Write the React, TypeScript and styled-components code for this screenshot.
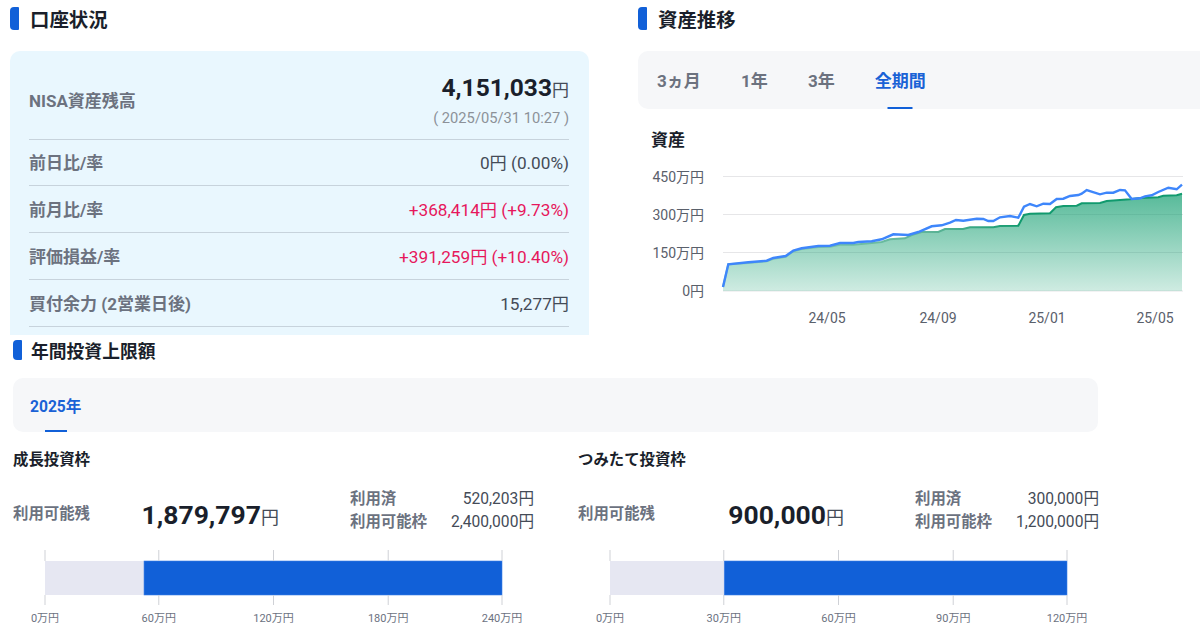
import React from "react";
import styled, { createGlobalStyle } from "styled-components";

const Global = createGlobalStyle`
  html, body { margin: 0; padding: 0; background: #fff; }
  body { font-family: Roboto, "Noto Sans CJK JP", sans-serif; color: #1a1f2b; }
  svg text { font-family: Roboto, "Noto Sans CJK JP", sans-serif; }
`;

const Page = styled.div`
  width: 1200px;
  height: 630px;
  overflow: hidden;
`;
const Top = styled.div`
  display: grid;
  grid-template-columns: 579px 562px;
  column-gap: 49px;
  height: 335px;
  padding: 7px 0 0 10px;
  box-sizing: border-box;
  overflow: hidden;
`;
const Column = styled.section`
  min-width: 0;
`;
const Heading = styled.h2<{ $size: number; $bar: number }>`
  display: flex;
  align-items: center;
  gap: ${(p) => (p.$size > 18 ? 11 : 9)}px;
  height: ${(p) => p.$bar}px;
  margin: 0;
  font-size: ${(p) => p.$size}px;
  font-weight: 700;
  color: #1a1f2b;
  &::before {
    content: "";
    width: 9px;
    height: ${(p) => p.$bar}px;
    background: #1160d8;
    border-radius: 4px 1px 1px 4px;
  }
`;
const Card = styled.div`
  margin-top: 21px;
  background: #e9f7fe;
  border-radius: 10px 10px 0 0;
  padding: 0 20px 0 19px;
  height: 284px;
  box-sizing: border-box;
`;
const Row = styled.div<{ $tall?: boolean }>`
  display: flex;
  justify-content: space-between;
  align-items: center;
  height: ${(p) => (p.$tall ? 88.6 : 46.75)}px;
  padding: ${(p) => (p.$tall ? "9px 0 0" : "0 0 1px")};
  box-sizing: border-box;
  border-bottom: 1px solid #c7d3dc;
`;
const RowLabel = styled.span`
  font-size: 17px;
  font-weight: 700;
  color: #6c727f;
`;
const RowValue = styled.span<{ $up?: boolean }>`
  font-size: 17.2px;
  color: ${(p) => (p.$up ? "#e6175c" : "#444b57")};
`;
const Total = styled.div`
  text-align: right;
`;
const TotalNumber = styled.div`
  font-size: 24.5px;
  line-height: 34px;
  font-weight: 700;
  color: #1a1f2b;
`;
const Yen = styled.span<{ $size: number }>`
  font-size: ${(p) => p.$size}px;
  font-weight: 400;
  color: #444b57;
`;
const TotalDate = styled.div`
  font-size: 14.7px;
  line-height: 20px;
  color: #8c9198;
  margin-top: 1px;
`;
const TabRow = styled.div<{ $top: number }>`
  margin-top: ${(p) => p.$top}px;
`;
const TabPanel = styled.div<{ $h: number; $pad: number; $round: string; $gap: number }>`
  display: flex;
  gap: ${(p) => p.$gap}px;
  align-items: center;
  height: ${(p) => p.$h}px;
  padding-left: ${(p) => p.$pad}px;
  background: #f6f7f9;
  border-radius: ${(p) => p.$round};
`;
const Tab = styled.div<{ $active?: boolean; $size: number; $line: number; $lift?: number }>`
  position: relative;
  height: 100%;
  box-sizing: border-box;
  padding-bottom: ${(p) => p.$lift ?? 0}px;
  display: flex;
  align-items: center;
  font-size: ${(p) => p.$size}px;
  font-weight: 700;
  color: ${(p) => (p.$active ? "#1a62d6" : "#6c727f")};
  &::after {
    content: "";
    display: ${(p) => (p.$active ? "block" : "none")};
    position: absolute;
    left: 50%;
    bottom: 0;
    width: ${(p) => p.$line}px;
    height: 2px;
    transform: translateX(-50%);
    background: #1160d8;
  }
`;
const ChartTitle = styled.h3`
  margin: 21px 0 0 13px;
  font-size: 17px;
  line-height: 20px;
  font-weight: 700;
  color: #1a1f2b;
`;
const AreaSvg = styled.svg`
  display: block;
  margin: 5px 0 0 1px;
`;
const Bottom = styled.section`
  padding: 5px 0 0 13px;
  width: 1085px;
`;
const Columns = styled.div`
  display: grid;
  grid-template-columns: 521px 521px;
  column-gap: 44px;
  margin-top: 18px;
`;
const Limit = styled.div``;
const LimitTitle = styled.h3`
  margin: 0;
  font-size: 15.4px;
  line-height: 20px;
  font-weight: 700;
  color: #1a1f2b;
`;
const LimitBody = styled.div`
  display: grid;
  grid-template-columns: 266px 1fr;
  margin-top: 17px;
  height: 46px;
  align-items: center;
`;
const Main = styled.div`
  display: flex;
  justify-content: space-between;
  align-items: center;
  padding-top: 4px;
`;
const Remain = styled.span`
  font-size: 15.4px;
  font-weight: 700;
  color: #6c727f;
`;
const Big = styled.span`
  font-size: 26.5px;
  font-weight: 700;
  color: #1a1f2b;
  padding-top: 4px;
`;
const Side = styled.div`
  display: grid;
  grid-template-columns: auto 1fr;
  margin-left: 71px;
  row-gap: 3px;
`;
const SideLabel = styled.span`
  font-size: 15.4px;
  line-height: 20px;
  font-weight: 700;
  color: #6c727f;
`;
const SideValue = styled.span`
  font-size: 15.6px;
  line-height: 20px;
  color: #444b57;
  text-align: right;
`;
const BarSvg = styled.svg`
  display: block;
  margin-top: 17px;
`;

const blue = "723,287 728.3,264.3 748.3,262.3 766.7,260.7 773.3,258 785.7,256 793.3,250.7 801.7,248.3 818.3,246 830,245.7 840,243 853.3,243 858.3,242 871.7,241.3 881.7,239.3 893.3,234.3 908.3,235 918.3,232 931.7,226.3 941.7,225.3 950,222.7 956,220 963.3,220.7 976.7,218.7 983.3,219 988.3,221 993.3,221 1000,217.3 1010,216 1018.3,217.7 1024,206.7 1030,204 1036.7,206.3 1043.3,203.7 1050,204 1056.7,199 1063.3,198.7 1070,196 1078.3,195 1081.7,193.7 1086.7,190 1100,194.3 1106.7,192.7 1113.3,192.7 1120,190 1125,190.3 1131.7,199 1140,198.3 1145,196.3 1151.7,195.3 1158.3,192 1168.3,187.7 1176.7,189.3 1182,184.7";
const green = "723,287 728.3,264.3 748.3,263 766.7,261.3 773.3,258.7 785.7,256.7 793.3,251.3 801.7,249 818.3,247 830,246.7 840,244.7 853.3,244.7 871.7,243 881.7,242 890,239.3 905,238.3 911.7,235 921.7,232 938.3,232 945,229 963,229 970,227.3 993.3,227.3 1000,226 1018.3,225.7 1024,215 1030,213.7 1050,213.3 1056,207.3 1063.3,206 1076.7,205.7 1081.7,203.3 1100,203 1106.7,201 1130,199.3 1140,198 1158.3,197.3 1163.3,195.7 1176.7,195.3 1182,193.7";

/* The chart svg starts at page x=639, y=155, so plot coordinates are shifted. */
const OX = 639;
const OY = 155;

function AreaChart() {
  const yTicks = [
    { label: "450万円", y: 176.5 },
    { label: "300万円", y: 214.5 },
    { label: "150万円", y: 252.5 },
    { label: "0円", y: 291 },
  ];
  const xTicks = [
    { label: "24/05", x: 827 },
    { label: "24/09", x: 938 },
    { label: "25/01", x: 1047 },
    { label: "25/05", x: 1155 },
  ];
  return (
    <AreaSvg width={561} height={175} viewBox={`${OX} ${OY} 561 175`}>
      <defs>
        <linearGradient id="assetFill" gradientUnits="userSpaceOnUse" x1="0" y1="190" x2="0" y2="291">
          <stop offset="0" stopColor="#0f9d6e" stopOpacity="0.72" />
          <stop offset="1" stopColor="#0f9d6e" stopOpacity="0.2" />
        </linearGradient>
        <linearGradient id="assetLine" gradientUnits="userSpaceOnUse" x1="723" y1="0" x2="1182" y2="0">
          <stop offset="0" stopColor="#8ccdb6" />
          <stop offset="0.45" stopColor="#5fb598" />
          <stop offset="0.65" stopColor="#119a6e" />
          <stop offset="1" stopColor="#119a6e" />
        </linearGradient>
      </defs>
      {yTicks.map((t) => (
        <line key={t.label} x1={723} x2={1183} y1={t.y} y2={t.y} stroke="#e6e6e8" strokeWidth={1} />
      ))}
      <polygon points={`${green} 1182,291 723,291`} fill="url(#assetFill)" />
      <polyline points={green} fill="none" stroke="url(#assetLine)" strokeWidth={2} />
      <polyline points={blue} fill="none" stroke="#3e86fb" strokeWidth={2.4} />
      {yTicks.map((t) => (
        <text key={t.label} x={704} y={t.y + 5} textAnchor="end" fontSize={14} fill="#5a606b">
          {t.label}
        </text>
      ))}
      {xTicks.map((t) => (
        <text key={t.label} x={t.x} y={323} textAnchor="middle" fontSize={14} fill="#5a606b">
          {t.label}
        </text>
      ))}
    </AreaSvg>
  );
}

const BAR_START = 32;
const BAR_W = 457;

function LimitBar({ used, labels }: { used: number; labels: string[] }) {
  const usedX = BAR_START + BAR_W * used;
  const ticks = [0, 0.249, 0.5, 0.751, 1];
  return (
    <BarSvg width={521} height={75} viewBox="0 0 521 75">
      <rect x={BAR_START} y={11} width={usedX - BAR_START} height={34} fill="#e6e7f2" />
      <rect x={usedX} y={11} width={BAR_START + BAR_W - usedX} height={34} fill="#1160d8" stroke="#3e7fe6" strokeWidth={0.6} />
      {ticks.map((t, i) => {
        const x = BAR_START + BAR_W * t;
        return (
          <g key={i}>
            <line x1={x} x2={x} y1={0} y2={11} stroke="#cfd1d6" />
            <line x1={x} x2={x} y1={45} y2={55} stroke="#cfd1d6" />
            <text x={x} y={72} textAnchor="middle" fontSize={11} fill="#6c727f">
              {labels[i]}
            </text>
          </g>
        );
      })}
    </BarSvg>
  );
}

function LimitBlock(p: { title: string; big: string; used: string; cap: string; ratio: number; labels: string[] }) {
  return (
    <Limit>
      <LimitTitle>{p.title}</LimitTitle>
      <LimitBody>
        <Main>
          <Remain>利用可能残</Remain>
          <Big>
            {p.big}
            <Yen $size={18}>円</Yen>
          </Big>
        </Main>
        <Side>
          <SideLabel>利用済</SideLabel>
          <SideValue>{p.used}円</SideValue>
          <SideLabel>利用可能枠</SideLabel>
          <SideValue>{p.cap}円</SideValue>
        </Side>
      </LimitBody>
      <LimitBar used={p.ratio} labels={p.labels} />
    </Limit>
  );
}

export default function App() {
  return (
    <Page>
      <Global />
      <Top>
        <Column>
          <Heading $size={19.4} $bar={23}>口座状況</Heading>
          <Card>
            <Row $tall>
              <RowLabel>NISA資産残高</RowLabel>
              <Total>
                <TotalNumber>
                  4,151,033<Yen $size={17}>円</Yen>
                </TotalNumber>
                <TotalDate>( 2025/05/31 10:27 )</TotalDate>
              </Total>
            </Row>
            <Row>
              <RowLabel>前日比/率</RowLabel>
              <RowValue>0円 (0.00%)</RowValue>
            </Row>
            <Row>
              <RowLabel>前月比/率</RowLabel>
              <RowValue $up>+368,414円 (+9.73%)</RowValue>
            </Row>
            <Row>
              <RowLabel>評価損益/率</RowLabel>
              <RowValue $up>+391,259円 (+10.40%)</RowValue>
            </Row>
            <Row>
              <RowLabel>買付余力 (2営業日後)</RowLabel>
              <RowValue>15,277円</RowValue>
            </Row>
          </Card>
        </Column>
        <Column>
          <Heading $size={19.4} $bar={23}>資産推移</Heading>
          <TabRow $top={21}>
            <TabPanel $h={58} $pad={19} $gap={40.2} $round="10px 0 0 10px">
              <Tab $size={17} $line={25} $lift={2}>3ヵ月</Tab>
              <Tab $size={17} $line={25} $lift={2}>1年</Tab>
              <Tab $size={17} $line={25} $lift={2}>3年</Tab>
              <Tab $active $size={17} $line={25} $lift={2}>全期間</Tab>
            </TabPanel>
          </TabRow>
          <ChartTitle>資産</ChartTitle>
          <AreaChart />
        </Column>
      </Top>
      <Bottom>
        <Heading $size={17.8} $bar={20}>年間投資上限額</Heading>
        <TabRow $top={18}>
          <TabPanel $h={54} $pad={17} $gap={0} $round="10px">
            <Tab $active $size={15.6} $line={22}>2025年</Tab>
          </TabPanel>
        </TabRow>
        <Columns>
          <LimitBlock
            title="成長投資枠"
            big="1,879,797"
            used="520,203"
            cap="2,400,000"
            ratio={0.2167}
            labels={["0万円", "60万円", "120万円", "180万円", "240万円"]}
          />
          <LimitBlock
            title="つみたて投資枠"
            big="900,000"
            used="300,000"
            cap="1,200,000"
            ratio={0.25}
            labels={["0万円", "30万円", "60万円", "90万円", "120万円"]}
          />
        </Columns>
      </Bottom>
    </Page>
  );
}
